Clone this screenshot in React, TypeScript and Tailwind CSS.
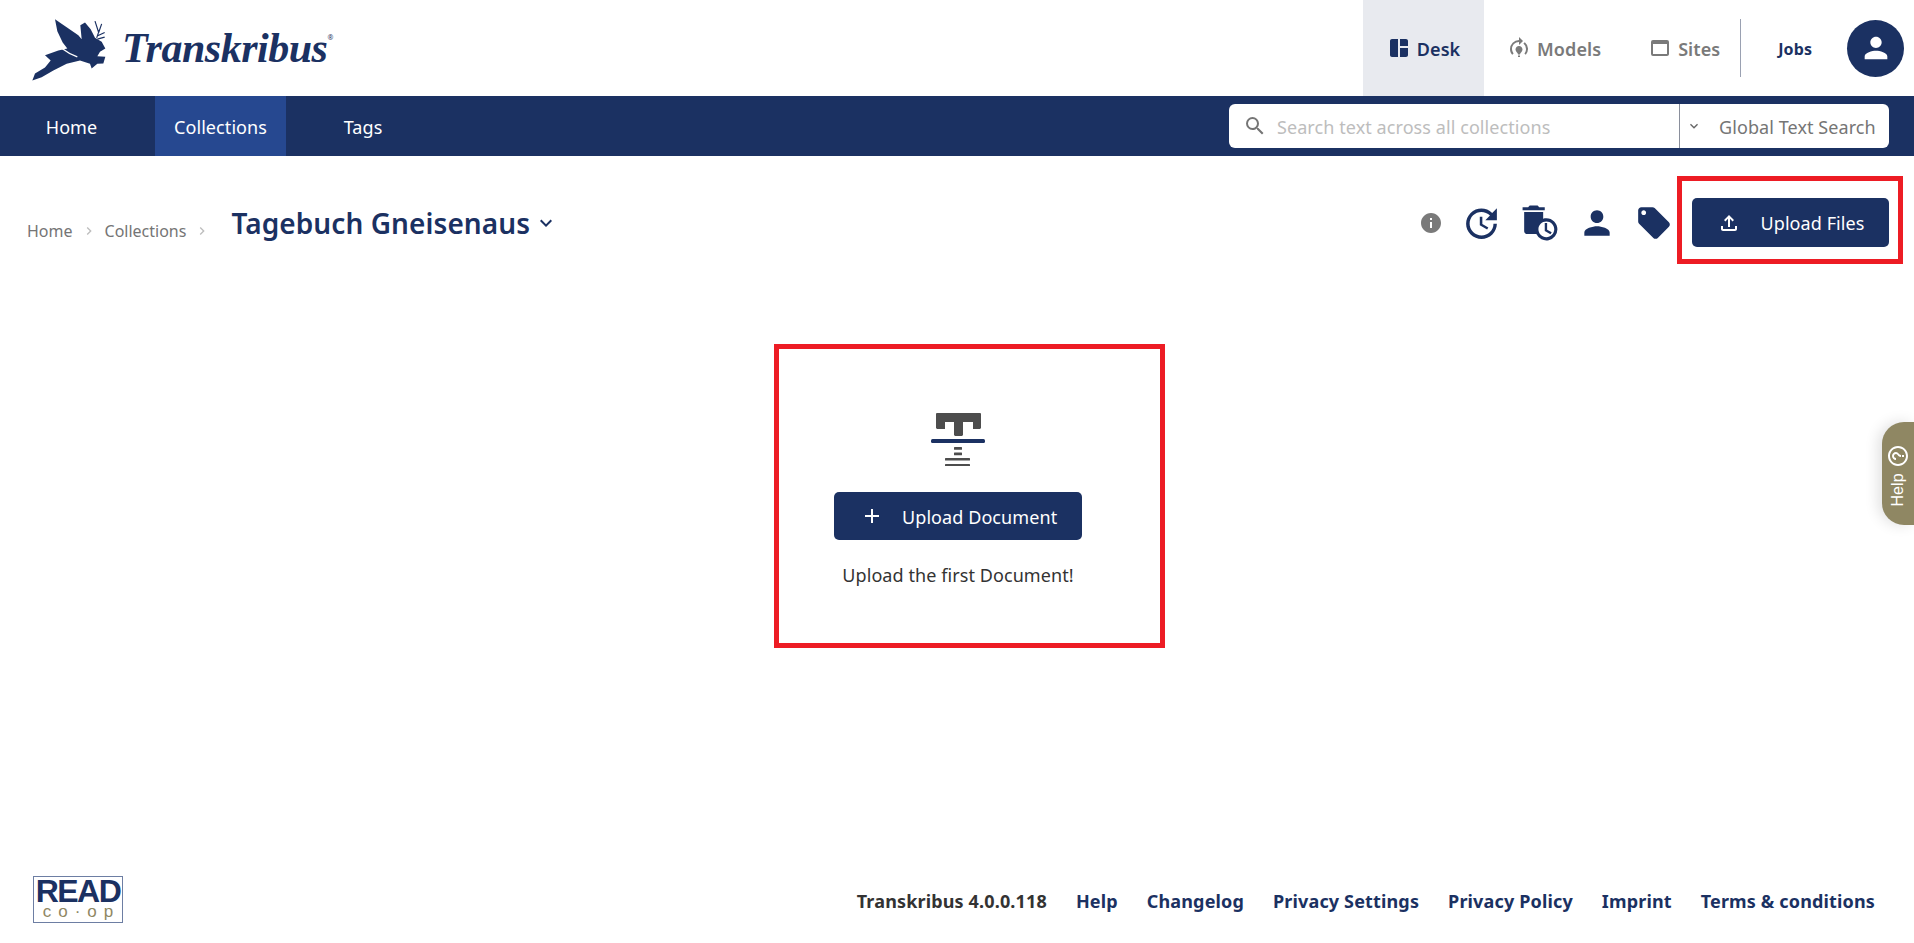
import {
  MdAdd,
  MdAutoDelete,
  MdExpandMore,
  MdHelpOutline,
  MdInfo,
  MdKeyboardArrowDown,
  MdLocalOffer,
  MdModelTraining,
  MdNavigateNext,
  MdOutlineFileUpload,
  MdOutlineWebAsset,
  MdPerson,
  MdSearch,
  MdSpaceDashboard,
  MdUpdate,
} from "react-icons/md";

const footerLinks = [
  "Help",
  "Changelog",
  "Privacy Settings",
  "Privacy Policy",
  "Imprint",
  "Terms & conditions",
];

const Jackalope = () => (
  <svg viewBox="90 40 240 200" className="h-[67px] w-[80px] shrink-0" fill="#1b3162">
    <path d="M97 236 L105 215 L135 197 L152 176 L135 160 L175 146 L202 140 L188 122 L172 88 L165 52 L200 76 L235 100 L245 112 L241 70 L255 62 L272 82 L285 108 L305 120 L316 140 L300 150 L292 163 L316 165 L310 185 L292 186 L275 200 L270 186 L240 176 L200 186 L160 206 L125 226 Z" />
    <path d="M186 140 Q205 155 232 165" stroke="#fff" strokeWidth="4" fill="none" />
    <path d="M290 108 L298 85 M296 92 L285 58 M296 92 L305 66 M293 102 L314 92 M292 112 L314 106" stroke="#1b3162" strokeWidth="3.5" fill="none" />
  </svg>
);

const EmptyIcon = () => (
  <svg viewBox="0 0 54 53" className="h-[53px] w-[54px]">
    <path d="M6 0 H49 Q50 0 50 1 V15 L49 16 H42 V9 H32 V22 L31 23 H24 L23 22 V9 H14 V16 H6 L5 15 V1 Q5 0 6 0 Z" fill="#4d4d4d" />
    <rect x="0" y="26" width="54" height="4" rx="1.5" fill="#1b3162" />
    <rect x="23" y="34" width="8" height="2.8" rx="0.5" fill="#4d4d4d" />
    <rect x="23" y="39.5" width="8" height="2.8" rx="0.5" fill="#4d4d4d" />
    <rect x="14" y="45" width="25" height="2.5" rx="0.5" fill="#4d4d4d" />
    <rect x="14" y="51" width="25" height="2.5" rx="0.5" fill="#4d4d4d" />
  </svg>
);

const App = () => {
  return (
    <div className="flex h-screen flex-col overflow-hidden bg-white font-['Noto_Sans',sans-serif] text-[18px] tracking-[0.08px] text-[#333]">
      <header className="flex h-24 shrink-0 items-center">
        <div className="ml-[30px] flex items-center">
          <Jackalope />
          <span className="ml-[12px] font-['Liberation_Serif',serif] text-[42px] font-bold italic leading-none tracking-[-0.5px] text-[#1b3162]">
            Transkribus
          </span>
          <span className="-mt-5 text-[7px] text-[#1b3162]">®</span>
        </div>
        <div className="ml-auto flex h-full items-center">
          <div className="flex h-full w-[121px] items-center justify-center gap-[6px] bg-[#e8eaef] font-semibold text-[#1b3162]">
            <MdSpaceDashboard className="text-[24px]" />
            <span className="pt-[2px]">Desk</span>
          </div>
          <div className="ml-[23px] flex items-center gap-[6px] font-semibold text-[#7a7a7a]">
            <MdModelTraining className="text-[24px]" />
            <span className="pt-[2px]">Models</span>
          </div>
          <div className="ml-[47px] flex items-center gap-[6px] font-semibold text-[#7a7a7a]">
            <MdOutlineWebAsset className="text-[24px]" />
            <span className="pt-[2px]">Sites</span>
          </div>
          <div className="ml-[20px] h-[58px] w-px bg-[#9aa1b2]" />
          <div className="ml-[37px] pt-[2px] text-[16px] font-bold text-[#1b3162]">Jobs</div>
          <div className="ml-[35px] mr-[10px] flex h-[57px] w-[57px] items-center justify-center rounded-full bg-[#1b3162] text-white">
            <MdPerson className="text-[34px]" />
          </div>
        </div>
      </header>

      <nav className="flex h-[60px] shrink-0 items-center bg-[#1b3162] text-white">
        <a className="flex h-full w-[155px] items-center justify-center pr-[12px] pt-[2px]">Home</a>
        <a className="flex h-full w-[131px] items-center justify-center bg-[#264890] pt-[2px]">Collections</a>
        <a className="flex h-full w-[154px] items-center justify-center pt-[2px]">Tags</a>
        <div className="ml-auto mr-[25px] flex h-[44px] w-[660px] items-center rounded-[6px] bg-white">
          <div className="flex h-full w-[451px] items-center border-r border-[#8a8f9c] pl-[14px]">
            <MdSearch className="text-[24px] text-[#757575]" />
            <span className="ml-[10px] pt-[2px] text-[#bdbdbd]">Search text across all collections</span>
          </div>
          <MdKeyboardArrowDown className="ml-[6px] text-[16px] text-[#666]" />
          <span className="ml-[17px] pt-[2px] text-[#757575]">Global Text Search</span>
        </div>
      </nav>

      <main className="flex flex-1 flex-col">
        <div className="mt-[20px] flex h-[88px] items-start pl-[27px] pr-[11px]">
          <div className="mt-[45px] flex items-center text-[16px] leading-5 tracking-normal text-[#757575]">
            Home
            <MdNavigateNext className="mx-[8px] text-[16px] text-[#bdbdbd]" />
            Collections
            <MdNavigateNext className="mx-[8px] text-[16px] text-[#bdbdbd]" />
          </div>
          <div className="ml-[13px] mt-[29px] flex items-center text-[28px] font-semibold leading-9 text-[#1b3162]">
            Tagebuch Gneisenaus
            <MdExpandMore className="ml-[4px] text-[24px]" />
          </div>
          <div className="ml-auto flex items-center">
            <div className="mr-[4px] mt-[6px] flex items-center text-[#1b3162]">
              <MdInfo className="text-[24px] text-[#7a7a7a]" />
              <MdUpdate className="ml-[18px] text-[41px]" />
              <MdAutoDelete className="ml-[19px] text-[38px]" />
              <MdPerson className="ml-[19px] text-[38px]" />
              <MdLocalOffer className="ml-[19px] text-[38px]" />
            </div>
            <div className="flex h-[88px] w-[226px] items-start justify-center border-[5px] border-[#ed1c24] pt-[17px]">
              <button className="flex h-[49px] w-[197px] items-center rounded-[5px] bg-[#1b3162] pl-[25px] text-white">
                <MdOutlineFileUpload className="text-[24px]" />
                <span className="ml-[20px] pt-[2px]">Upload Files</span>
              </button>
            </div>
          </div>
        </div>

        <div className="mt-[80px] flex justify-center pl-[25px]">
          <div className="flex h-[304px] w-[391px] flex-col items-center border-[5px] border-[#ed1c24] pr-[23px] pt-[64px]">
            <EmptyIcon />
            <button className="mt-[26px] flex h-[48px] w-[248px] items-center rounded-[5px] bg-[#1b3162] pl-[26px] text-white">
              <MdAdd className="text-[24px]" />
              <span className="ml-[18px] pt-[2px]">Upload Document</span>
            </button>
            <p className="mt-[23px] leading-6">Upload the first Document!</p>
          </div>
        </div>
      </main>

      <footer className="flex h-[68px] shrink-0 items-start pl-[33px] pr-[39px]">
        <div className="mt-[1px] flex h-[47px] w-[90px] flex-col items-center border border-[#6d7ea3] font-['Liberation_Sans',sans-serif]">
          <span className="mt-[1px] text-[32px] font-bold leading-[26px] tracking-[-1.5px] text-[#1b3162]">READ</span>
          <span className="pl-[7px] text-[17px] leading-[15px] tracking-[7px] text-[#8f8763]">co·op</span>
        </div>
        <div className="ml-auto mt-[14px] flex items-center gap-[29px] font-bold leading-6 tracking-[0.15px] text-[#1b3162]">
          <span className="text-[#333]">Transkribus 4.0.0.118</span>
          {footerLinks.map((link) => (
            <a key={link}>{link}</a>
          ))}
        </div>
      </footer>

      <div className="absolute right-0 top-[422px] flex h-[103px] w-[32px] flex-col items-center justify-center gap-[9px] rounded-l-[22px] bg-[#8f8763] text-white shadow-[-4px_0_14px_rgba(0,0,0,0.12)]">
        <MdHelpOutline className="-rotate-90 text-[24px]" />
        <span className="-rotate-90 font-['Liberation_Sans',sans-serif] text-[16px] leading-[26px]">Help</span>
      </div>
    </div>
  );
};

export default App;
